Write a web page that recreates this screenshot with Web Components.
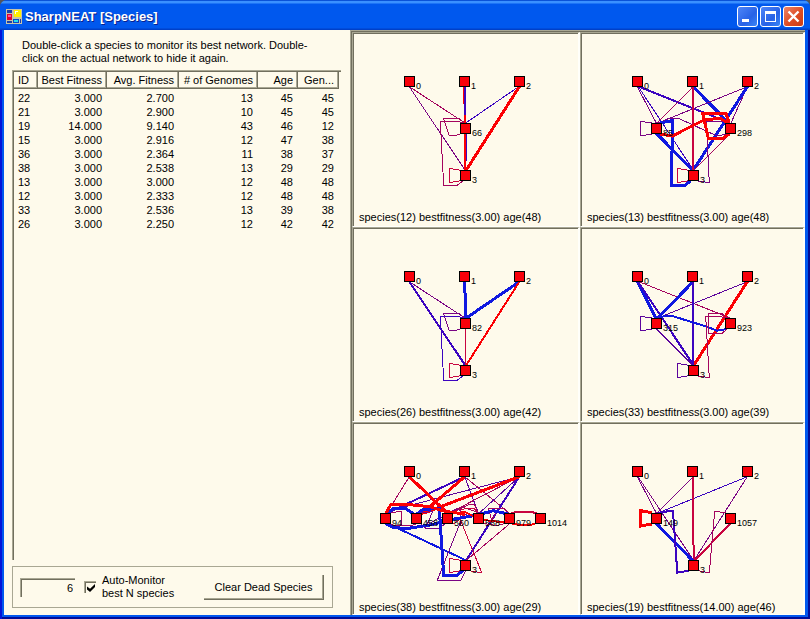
<!DOCTYPE html>
<html lang="en">
<head>
<meta charset="utf-8">
<title>SharpNEAT [Species]</title>
<style>
  :root {
    --face: #fefaeb;
    --light: #a9a793;
    --dark: #716f5e;
  }
  html, body { height: 100%; }
  body {
    margin: 0;
    background: #54565c;
    color: #000;
    font: 11px/13px "Liberation Sans", Arial, sans-serif;
  }
</style>
</head>
<body>
<app-window caption="SharpNEAT [Species]">
  <species-panel slot="side"></species-panel>
  <network-grid slot="main"></network-grid>
</app-window>

<script>
const define = (name, html, setup) => {
  const template = document.createElement('template');
  template.innerHTML = html;
  customElements.define(name, class extends HTMLElement {
    connectedCallback() {
      if (this.shadowRoot) return;
      const root = this.attachShadow({ mode: 'open' });
      root.append(template.content.cloneNode(true));
      if (setup) setup(this, root);
    }
  });
};

/* One monitored network: links below, then node numbers and nodes. */
define('network-view', `
<style>
  :host { display: flex; flex-direction: column; min-width: 0; min-height: 0; overflow: hidden; box-sizing: border-box;
          border: 1px solid var(--light); border-right: 2px solid #fffffa; border-bottom-color: #fffffa;
          padding: 1px 0 0 1px; box-shadow: inset 1px 1px var(--dark); }
  svg { display: block; flex: none; width: 220px; height: 177px; overflow: visible; }
  text { font-size: 9px; fill: #000; }
  p { margin: 0; padding: 0 5px; white-space: nowrap; }
</style>
<svg role="img" aria-label="Neural network"></svg>
<p><slot></slot></p>`, (host, root) => {
  const { nodes, links, origin } = host.network;
  const svg = root.querySelector('svg');
  svg.setAttribute('viewBox', `${origin} 4 220 177`);
  const lines = links.map(l => {
    const [color, width, ...pts] = l.split(' ');
    const p = pts.map(q => q.split(',').map(v => (v / 3).toFixed(1)).join(',')).join(' ');
    return `<polyline points="${p}" fill="none" stroke="${color}" stroke-width="${width}"/>`;
  }).join('');
  const boxes = nodes.map(([x, y]) =>
    `<rect x="${x}" y="${y}" width="11" height="11" fill="#000"/><rect x="${x + 1}" y="${y + 1}" width="9" height="9" fill="#f8000a"/>`).join('');
  const labels = nodes.map(([x, y, t]) => `<text x="${x + 12}" y="${y + 13}">${t}</text>`).join('');
  svg.innerHTML = `<g shape-rendering="crispEdges">${lines}</g>${labels}<g shape-rendering="crispEdges">${boxes}</g>`;
});

const R = '#fb0004', B = '#1018e0', V = '#3c04c0', P = '#7a0484', M = '#a4045e', C = '#c80440', U = '#5c049c';
const left = [[54, 46, 0], [109, 46, 1], [164, 46, 2], [110, 140, 3]];
const right = [[52, 46, 0], [107, 46, 1], [162, 46, 2], [108, 140, 3]];
const networks = [
  { text: 'species(12) bestfitness(3.00) age(48)', origin: 4, nodes: [...left, [110, 93, 66]], links: [
    `${M} 1 178,170 345,279`, `${P} 1 178,170 345,420`, `${V} 1 506,170 347,279`,
    `${R} 3 508,170 349,420`, `${R} 2 343,170 346,420`, `${V} 2 345,170 345,256`, `${V} 1 349,312 349,392`,
    `${M} 1 330,266 281,266 298,317 330,314`, `${M} 1 340,279 322,274 271,274 281,466 322,466 340,452`,
    `${C} 1 332,421 298,415 298,458 332,452`] },
  { text: 'species(13) bestfitness(3.00) age(48)', origin: 2, nodes: [...right, [71, 93, 85], [145, 93, 298]], links: [
    `${P} 1 172,170 229,279`, `${V} 1 175,170 340,420`, `${V} 2 172,168 450,279`,
    `${M} 1 339,170 231,279`, `${B} 3 339,170 450,283`, `${P} 1 502,170 234,279`, `${P} 1 502,170 453,279`,
    `${B} 3 502,170 340,420`, `${M} 1 451,312 342,420`, `${B} 3 229,310 340,422`,
    `${P} 1 240,278 262,266 298,266 411,318 440,312`, `${P} 1 216,279 181,274 181,317 216,313`,
    `${C} 1 326,421 292,415 292,458 326,452`, `${B} 3 240,279 277,272 275,466 314,466 332,453`,
    `${P} 1 438,274 379,274 388,458 354,453`, `${C} 2 339,170 340,420`,
    `${R} 3 240,312 277,318 376,268 422,266 448,281`, `${R} 3 448,281 438,250 368,250 385,325 428,325 448,312`] },
  { text: 'species(26) bestfitness(3.00) age(42)', origin: 4, nodes: [...left, [110, 93, 82]], links: [
    `${P} 1 178,170 345,279`, `${V} 2 178,170 345,420`, `${B} 3 344,170 347,279`, `${B} 3 508,170 349,279`,
    `${R} 2 508,170 349,420`, `${C} 1 346,312 346,420`,
    `${P} 1 330,266 281,266 298,317 330,314`, `${V} 1 340,279 322,274 271,274 281,466 322,466 340,452`,
    `${C} 1 332,421 298,415 298,458 332,452`] },
  { text: 'species(33) bestfitness(3.00) age(39)', origin: 2, nodes: [...right, [71, 93, 315], [145, 93, 923]], links: [
    `${B} 3 172,170 229,282`, `${V} 2 174,170 340,420`, `${M} 1 172,168 450,279`,
    `${B} 3 339,170 231,282`, `${U} 1 502,170 234,279`, `${R} 3 502,170 342,420`,
    `${U} 1 229,312 338,420`, `${V} 2 339,170 339,420`,
    `${B} 2 236,279 256,272 280,274 380,305 411,317 440,312`,
    `${U} 1 216,279 181,274 181,317 216,313`, `${U} 1 326,421 292,415 292,458 326,452`,
    `${M} 1 442,279 428,266 386,266 386,325 426,325 442,312`,
    `${M} 1 438,278 415,274 377,274 388,458 354,453`] },
  { text: 'species(38) bestfitness(3.00) age(29)', origin: 4,
    nodes: [...left, [30, 93, 94], [61, 93, 458], [92, 93, 560], [123, 93, 588], [154, 93, 979], [185, 93, 1014]], links: [
    `${M} 1 178,170 108,283`, `${V} 2 344,170 112,279`, `${U} 1 508,170 112,274`,
    `${M} 1 344,170 478,279`, `${U} 1 344,170 385,279`, `${M} 1 508,170 298,279`, `${U} 1 508,170 388,279`,
    `${V} 2 508,170 349,420`, `${R} 3 178,170 292,279`, `${R} 3 344,170 205,290`, `${R} 3 508,170 220,280`,
    `${M} 1 478,312 350,420`, `${B} 2 108,308 346,420`,
    `${M} 1 118,279 154,274 154,317 118,314`, `${M} 1 154,317 184,317 205,310`,
    `${P} 1 210,310 228,325 268,325 290,308`, `${P} 1 214,279 248,274 230,317 262,296 290,290`,
    `${M} 1 298,279 340,262 376,274 390,285`, `${C} 1 298,279 330,268 372,265 388,283`,
    `${M} 1 298,279 356,254 374,254 384,279`, `${C} 1 308,279 346,274 334,296 310,312`,
    `${P} 1 296,279 320,266 350,285 372,290`, `${M} 1 330,262 330,317`,
    `${P} 1 330,310 262,481 332,481 348,450`, `${C} 1 330,296 395,458 356,452`,
    `${C} 1 332,421 298,415 298,458 332,452`,
    `${M} 1 400,310 440,317 466,310`, `${M} 1 478,279 460,266 415,266 425,300 438,276 472,279`,
    `${C} 2 484,279 500,276 545,276 566,282`,
    `${B} 3 106,310 130,322 168,326 245,314 296,300 378,286 430,272 478,283`,
    `${B} 3 108,282 130,266 168,266 196,285 220,268 268,266 281,466 322,466 342,448`,
    `${R} 3 106,283 122,254 180,254 240,260 276,272 345,283`,
    `${R} 2 290,283 345,276 378,292 400,300 484,310 512,316 540,316 568,306`] },
  { text: 'species(19) bestfitness(14.00) age(46)', origin: 2, nodes: [...right, [71, 93, 149], [145, 93, 1057]], links: [
    `${P} 1 172,170 229,279`, `${P} 1 174,170 340,420`, `${P} 1 339,170 232,279`, `${V} 1 502,170 234,279`,
    `${P} 1 502,170 343,420`, `${C} 2 338,170 341,420`, `${B} 3 229,310 340,424`, `${C} 2 451,310 342,424`,
    `${R} 3 216,278 182,272 182,318 216,312`, `${V} 2 238,280 262,274 279,274 292,458 326,452`,
    `${M} 1 438,278 404,274 388,458 354,452`] }
];

define('network-grid', `
<style>
  :host { display: grid; grid-template: 195fr 195fr 193fr / 228fr 225fr; min-width: 0; min-height: 0;
          border: 0 solid var(--light); border-width: 1px 0 0 1px; padding: 1px 0 0 1px;
          box-shadow: inset 1px 1px var(--dark); box-sizing: border-box; overflow: hidden; }
</style>`, (host, root) => {
  for (const network of networks) {
    const view = document.createElement('network-view');
    view.network = network;
    view.textContent = network.text;
    root.append(view);
  }
});

define('species-table', `
<style>
  :host { display: block; flex: 1; min-height: 0; border: 0 solid var(--light); border-width: 1px 0 0 1px; padding: 1px 0 0 1px;
          box-shadow: inset 1px 1px var(--dark); }
  table { border-collapse: separate; border-spacing: 0; table-layout: fixed; width: 325px; }
  th, td { padding: 0 5px 0 0; text-align: right; font-weight: 400; line-height: 14px; white-space: nowrap; overflow: hidden; }
  th { box-sizing: border-box; height: 17px; padding: 1px 4px 1px 0; border: 0 solid var(--dark); border-width: 0 1px 1px 0;
       box-shadow: inset -1px -1px var(--light); }
  th:first-child, td:first-child { text-align: left; padding-left: 4px; padding-right: 0; }
  tbody::before { content: ""; display: block; height: 2px; }
</style>
<table>
  <colgroup><col style="width:24px"><col style="width:69px"><col style="width:72px"><col style="width:79px"><col style="width:40px"><col style="width:41px"></colgroup>
  <thead><tr><th>ID</th><th>Best Fitness</th><th>Avg. Fitness</th><th># of Genomes</th><th>Age</th><th>Gen...</th></tr></thead>
  <tbody></tbody>
</table>`, (host, root) => {
  const rows = `22 3.000 2.700 13 45 45|21 3.000 2.900 10 45 45|19 14.000 9.140 43 46 12|15 3.000 2.916 12 47 38|36 3.000 2.364 11 38 37|38 3.000 2.538 13 29 29|13 3.000 3.000 12 48 48|12 3.000 2.333 12 48 48|33 3.000 2.536 13 39 38|26 3.000 2.250 12 42 42`;
  root.querySelector('tbody').innerHTML = rows.split('|').map(r =>
    `<tr>${r.split(' ').map(c => `<td>${c}</td>`).join('')}</tr>`).join('');
});

define('monitor-controls', `
<style>
  :host { display: flex; align-items: center; border: 1px solid var(--light); box-sizing: border-box; min-height: 42px; padding: 0 8px 0 7px; }
  input, button { font: inherit; color: inherit; background: var(--face); border: 0 solid var(--light); border-radius: 0; box-sizing: border-box; }
  input { border-width: 1px 0 0 1px; box-shadow: inset 1px 1px var(--dark); }
  input[type=text] { width: 55px; height: 19px; margin: 0 9px 0 0; padding: 1px 2px 0 0; text-align: right; }
  label { display: flex; align-items: center; gap: 6px; flex: 1; }
  input[type=checkbox] { appearance: none; display: grid; place-items: center; flex: none; width: 12px; height: 12px; margin: 0; padding: 1px 0 0 1px; }
  input[type=checkbox]:checked::before { content: ""; width: 8px; height: 8px; background: #000;
    clip-path: polygon(0 30%, 38% 60%, 100% 0, 100% 38%, 38% 100%, 0 68%); }
  button { width: 120px; height: 25px; padding: 2px 0 0; border-color: var(--dark); border-width: 0 1px 1px 0; box-shadow: inset -1px -1px var(--light); }
</style>
<input type="text" value="6" aria-label="Number of species to monitor">
<label><input type="checkbox" checked><span>Auto-Monitor<br>best N species</span></label>
<button type="button">Clear Dead Species</button>`);

define('species-panel', `
<style>
  :host { display: flex; flex-direction: column; box-sizing: border-box; min-height: 0; padding: 9px 9px 7px 8px; }
  p { margin: 0; padding: 0 10px 5px; max-width: 300px; }
  monitor-controls { margin: 6px 8px 0 0; }
</style>
<p>Double-click a species to monitor its best network. Double-click on the actual network to hide it again.</p>
<species-table></species-table>
<monitor-controls></monitor-controls>`);

define('title-bar', `
<style>
  :host { display: flex; align-items: center; box-sizing: border-box; height: 30px; padding: 3px 6px 0 6px; gap: 3px;
    color: #fff; background: linear-gradient(#0a52d8 0 1px, #3a90ff 1px 3px, #0058ee 4px 28px, #0040c8 29px); }
  h1 { flex: 1; margin: 0; padding-top: 1px; font: bold 13px/18px "Liberation Sans", Arial, sans-serif; text-shadow: 1px 1px 0 #0a1f8c; white-space: nowrap; }
  button { width: 21px; height: 21px; padding: 0; border: 1px solid #fff; border-radius: 3px; background: linear-gradient(135deg, #4f86f8, #2862e6 60%, #3a86f6); }
  button + button { margin-left: -1px; }
  .close { background: linear-gradient(135deg, #ec8468, #de4c24 55%, #cc3c14); }
  svg { display: block; }
</style>
<svg width="16" height="15" viewBox="0 0 16 15" shape-rendering="crispEdges" aria-hidden="true">
  <path fill="#c8c4a8" d="M0 0h16v15H0z"/><path fill="#1c3fa8" d="M1 1h5v3H1zM1 12h5v2H1zM14 10h1v4h-1z"/>
  <path fill="#e00030" d="M1 5h5v6H1z"/><path fill="#ff50a0" d="M2 6h3v2H2z"/>
  <path fill="#fff000" d="M8 1h7v7H8z"/><path fill="#fff" d="M9 2h3v1H9zM9 2h1v3H9z"/>
  <path fill="#0848c8" d="M7 10h6v4H7z"/><path fill="#20e0f0" d="M8 11h4v2H8z"/>
</svg>
<h1><slot></slot></h1>
<button type="button" aria-label="Minimize"><svg width="19" height="19"><path fill="#fff" d="M4 12h7v3H4z"/></svg></button>
<button type="button" aria-label="Maximize"><svg width="19" height="19" shape-rendering="crispEdges"><path fill="#fff" fill-rule="evenodd" d="M4 4h11v11H4zM5 7h9v7H5z"/></svg></button>
<button type="button" aria-label="Close" class="close"><svg width="19" height="19"><path stroke="#fff" stroke-width="2.4" d="M4.500 4.500l10 10M14.500 4.500l-10 10"/></svg></button>`);

define('app-window', `
<style>
  :host { display: flex; flex-direction: column; height: 100vh; box-sizing: border-box; overflow: hidden; background: #0055ea; border-radius: 7px 7px 0 0; }
  .frame { flex: 1; min-height: 0; display: flex; flex-direction: column; box-sizing: border-box; padding: 0 5px 4px 4px;
    background: #0058ee; box-shadow: inset 2px 0 #0414d8, inset -2px 0 #000c98, inset 0 -2px #000c98; }
  main { flex: 1; min-height: 0; display: grid; grid-template-columns: 346px minmax(0, 1fr); grid-template-rows: minmax(0, 1fr); background: var(--face); }
</style>
<title-bar></title-bar>
<div class="frame"><main><slot name="side"></slot><slot name="main"></slot></main></div>`, (host, root) => {
  root.querySelector('title-bar').textContent = host.getAttribute('caption');
});
</script>
</body>
</html>
